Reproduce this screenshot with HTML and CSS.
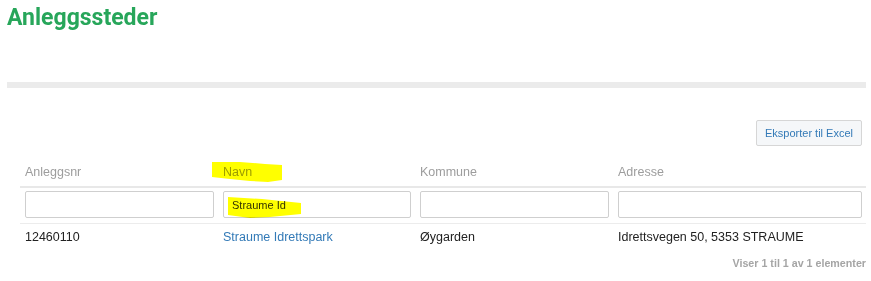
FILE: index.html
```html
<!DOCTYPE html>
<html lang="no">
<head>
    <meta charset="UTF-8">
    <meta name="viewport" content="width=device-width, initial-scale=1.0">
    <title>Anleggssteder</title>
    <link rel="stylesheet" href="styles.css">
</head>
<body>
    <div class="page">
        <h1 class="title">Anleggssteder</h1>
        <div class="divider"></div>

        <div class="toolbar">
            <button class="btn-export">Eksporter til Excel</button>
        </div>

        <table class="grid">
            <colgroup>
                <col class="col-nr">
                <col class="col-name">
                <col class="col-kommune">
                <col class="col-adr">
            </colgroup>
            <thead>
                <tr class="head-row">
                    <th>Anleggsnr</th>
                    <th>Navn</th>
                    <th>Kommune</th>
                    <th>Adresse</th>
                </tr>
                <tr class="filter-row">
                    <td><input type="text"></td>
                    <td><input type="text" value="Straume Id"></td>
                    <td><input type="text"></td>
                    <td><input type="text"></td>
                </tr>
            </thead>
            <tbody>
                <tr class="data-row">
                    <td>12460110</td>
                    <td><a href="#">Straume Idrettspark</a></td>
                    <td>Øygarden</td>
                    <td>Idrettsvegen 50, 5353 STRAUME</td>
                </tr>
            </tbody>
        </table>

        <div class="info">Viser 1 til 1 av 1 elementer</div>

        <!-- marker highlights drawn over the screenshot -->
        <svg class="marker" width="871" height="281" viewBox="0 0 871 281">
            <polygon points="212,162 240,162 265,164 282,165 282,180 268,182 250,181 230,179 212,177"/>
            <polygon points="228,197 262,199 301,203 301,214 270,217 250,218 228,215"/>
        </svg>
    </div>
</body>
</html>
```

FILE: styles.css
```css
body {
    margin: 0;
    font-family: "Liberation Sans", Arial, sans-serif;
    background-color: #fff;
    color: #333;
}

.page {
    position: relative;
    padding: 5px 5px 0 7px;
}

.title {
    margin: 0;
    font-family: Roboto, "Liberation Sans", sans-serif;
    font-size: 23px;
    line-height: 26px;
    font-weight: bold;
    color: #27a65a;
}

.divider {
    margin-top: 51px;
    height: 6px;
    background-color: #ebebeb;
}

.toolbar {
    display: flex;
    justify-content: flex-end;
    padding-right: 4px;
    margin-top: 32px;
}

.btn-export {
    height: 26px;
    padding: 0 8px;
    font-family: "Liberation Sans", Arial, sans-serif;
    font-size: 11px;
    color: #337ab7;
    background-color: #f5f7f9;
    border: 1px solid #d6d6d6;
    border-radius: 2px;
}

.grid {
    margin: 8px 0 0 13px;
    width: 846px;
    table-layout: fixed;
    border-collapse: collapse;
    font-size: 12.5px;
    line-height: 16px;
}

.col-nr { width: 198px; }
.col-name { width: 197px; }
.col-kommune { width: 198px; }
.col-adr { width: 253px; }

.head-row th {
    padding: 10px 4px 6px 5px;
    text-align: left;
    font-weight: normal;
    color: #9d9d9d;
    border-bottom: 2px solid #e8e8e8;
}

.filter-row td {
    padding: 3px 4px 5px 5px;
    border-bottom: 1px solid #ececec;
}

.filter-row input {
    display: block;
    width: 100%;
    height: 27px;
    box-sizing: border-box;
    padding: 0 8px;
    font-family: "Liberation Sans", Arial, sans-serif;
    font-size: 11px;
    color: #333;
    border: 1px solid #cfcfcf;
    border-radius: 2px;
}

.data-row td {
    padding: 5px 4px 5px 5px;
    color: #222;
}

.data-row a {
    color: #337ab7;
    text-decoration: none;
}

.info {
    margin-top: 6px;
    text-align: right;
    font-size: 10.7px;
    line-height: 14px;
    font-weight: bold;
    color: #a5a5a5;
}

.marker {
    position: absolute;
    top: 0;
    left: 0;
    pointer-events: none;
    mix-blend-mode: multiply;
}

.marker polygon {
    fill: #ffff00;
}
```
